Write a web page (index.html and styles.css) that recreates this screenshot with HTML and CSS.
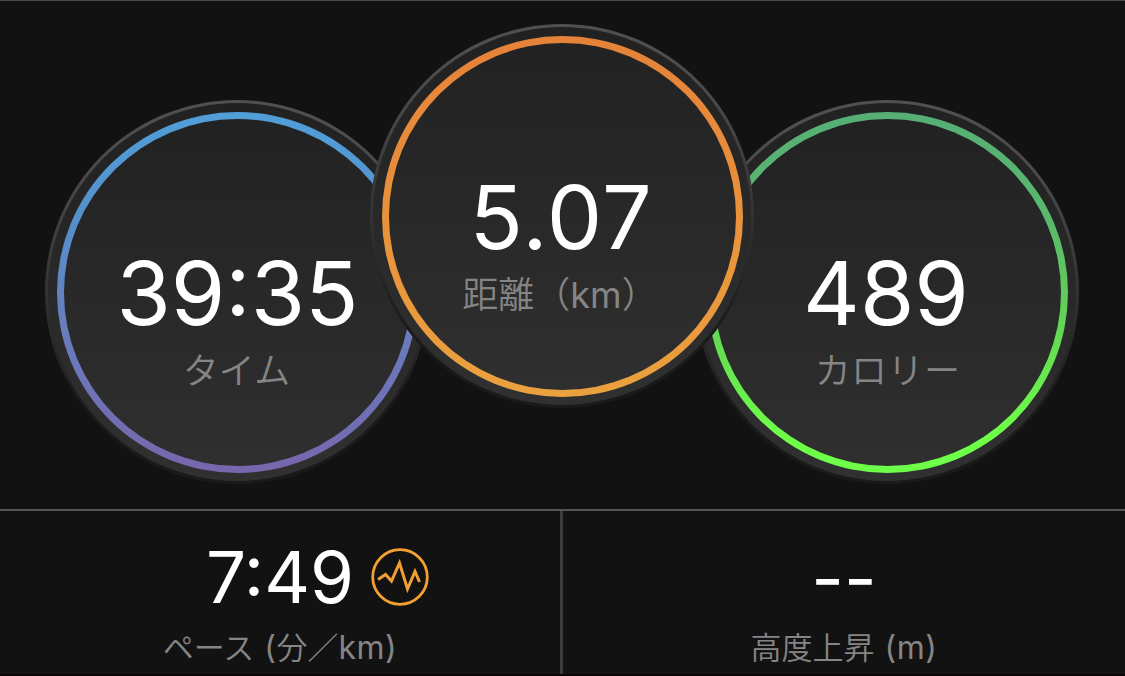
FILE: index.html
```html
<!DOCTYPE html>
<html lang="ja">
<head>
    <meta charset="UTF-8">
    <meta name="viewport" content="width=device-width, initial-scale=1.0">
    <title>アクティビティ</title>
    <link rel="stylesheet" href="styles.css">
</head>
<body>

    <div class="dials">
        <div class="dial dial-time">
            <div class="dial-face">
                <div class="dial-ring">
                    <div class="dial-core">
                        <div class="dial-value">39:35</div>
                        <div class="dial-label">タイム</div>
                    </div>
                </div>
            </div>
        </div>
        <div class="dial dial-distance">
            <div class="dial-face">
                <div class="dial-ring">
                    <div class="dial-core">
                        <div class="dial-value">5.07</div>
                        <div class="dial-label">距離（<span class="unit">km</span>）</div>
                    </div>
                </div>
            </div>
        </div>
        <div class="dial dial-calories">
            <div class="dial-face">
                <div class="dial-ring">
                    <div class="dial-core">
                        <div class="dial-value">489</div>
                        <div class="dial-label">カロリー</div>
                    </div>
                </div>
            </div>
        </div>
    </div>

    <div class="stats">
        <div class="stat stat-pace">
            <div class="stat-value">
                <span>7:49</span>
                <svg class="pace-icon" width="58" height="58" viewBox="0 0 58 58" fill="none" stroke="#f3a033">
                    <circle cx="29" cy="29" r="27.3" stroke-width="2.8"/>
                    <path d="M7 31.5L14.5 26.5L20.5 33L28.5 15L36.5 41L44 23.5L48.5 34" stroke-width="3" stroke-miterlimit="10"/>
                </svg>
            </div>
            <div class="stat-label">ペース <span class="unit">(</span>分／<span class="unit">km)</span></div>
        </div>
        <div class="stat stat-elevation">
            <div class="stat-value stat-empty">--</div>
            <div class="stat-label">高度上昇 <span class="unit">(m)</span></div>
        </div>
    </div>

</body>
</html>
```

FILE: styles.css
```css
body {
    font-family: Inter, 'Noto Sans CJK JP', sans-serif;
    margin: 0;
    height: 676px;
    box-sizing: border-box;
    display: flex;
    flex-direction: column;
    background-color: #121212;
    border-top: 1px solid #4a4a4a;
    border-bottom: 2px solid #0c0508;
    color: white;
    overflow: hidden;
}

/* Les trois cadrans */
.dials {
    display: flex;
    height: 508px;
    box-sizing: border-box;
    padding: 23px 0 0 45px;
}

.dial {
    width: 384px;
    height: 384px;
    box-sizing: border-box;
    flex: none;
    padding: 3px;
    border-radius: 50%;
    background: linear-gradient(#505050, #4a4a4a 20%, #2c2c2c 58%, #1a1a1a 80%, #1a1a1a);
}

.dial-time,
.dial-calories {
    margin-top: 76px;
}

/* Le cadran central passe par-dessus les deux autres */
.dial-distance {
    margin: 0 -59px;
    z-index: 1;
}

.dial-face {
    height: 100%;
    box-sizing: border-box;
    padding: 9px 8px 8px 9px;
    border-radius: 50%;
    background: linear-gradient(#212121, #303030);
}

.dial-ring {
    height: 100%;
    box-sizing: border-box;
    padding: 7px;
    border-radius: 50%;
}

.dial-time .dial-ring {
    background: linear-gradient(#519fd8, #5590cc 30%, #6480c0 55%, #7866ad);
}

.dial-distance .dial-ring {
    background: linear-gradient(#e58239, #eba13e);
}

.dial-calories .dial-ring {
    background: linear-gradient(#56ae76, #59b86c 30%, #62d057 55%, #6eff49 90%);
}

.dial-core {
    height: 100%;
    display: flex;
    flex-direction: column;
    align-items: center;
    border-radius: 50%;
    background: linear-gradient(#222222, #2f2f2f);
}

.dial-value {
    margin-top: 128px;
    font-size: 88px;
    line-height: 92px;
}

.dial-distance .dial-value {
    letter-spacing: 1.5px;
    margin-left: -2px;
}

.dial-calories .dial-value {
    margin-left: -3px;
}

.dial-label {
    margin-top: 1px;
    font-size: 36px;
    line-height: 56px;
    font-weight: 350;
    font-family: 'Noto Sans CJK JP', sans-serif;
    color: #858585;
    white-space: nowrap;
}

.dial-time .dial-label {
    margin-left: -2px;
}

.dial-distance .dial-label {
    margin-left: -5px;
}

.dial-calories .dial-label {
    letter-spacing: 0.4px;
}

.unit {
    font-family: Inter, sans-serif;
    font-weight: 400;
}

/* Allure et dénivelé */
.stats {
    flex: 1;
    display: flex;
    border-top: 2px solid #555555;
}

.stat {
    flex: 1;
    display: flex;
    flex-direction: column;
    align-items: center;
}

.stat-pace {
    flex: none;
    width: 560px;
    border-right: 3px solid #3b3b3b;
}

.stat-value {
    display: flex;
    align-items: center;
    margin-top: 26px;
    height: 80px;
    font-size: 71px;
}

.stat-empty {
    margin-top: 27px;
    margin-bottom: -1px;
}

/* La marge négative garde le chiffre centré dans la colonne */
.pace-icon {
    margin-left: 17px;
    margin-right: -75px;
}

.stat-label {
    margin-top: 7px;
    font-size: 31px;
    line-height: 44px;
    font-weight: 350;
    font-family: 'Noto Sans CJK JP', sans-serif;
    color: #858585;
    white-space: nowrap;
    word-spacing: 3px;
}

.stat-label .unit {
    font-size: 32px;
    letter-spacing: 0.5px;
}
```
